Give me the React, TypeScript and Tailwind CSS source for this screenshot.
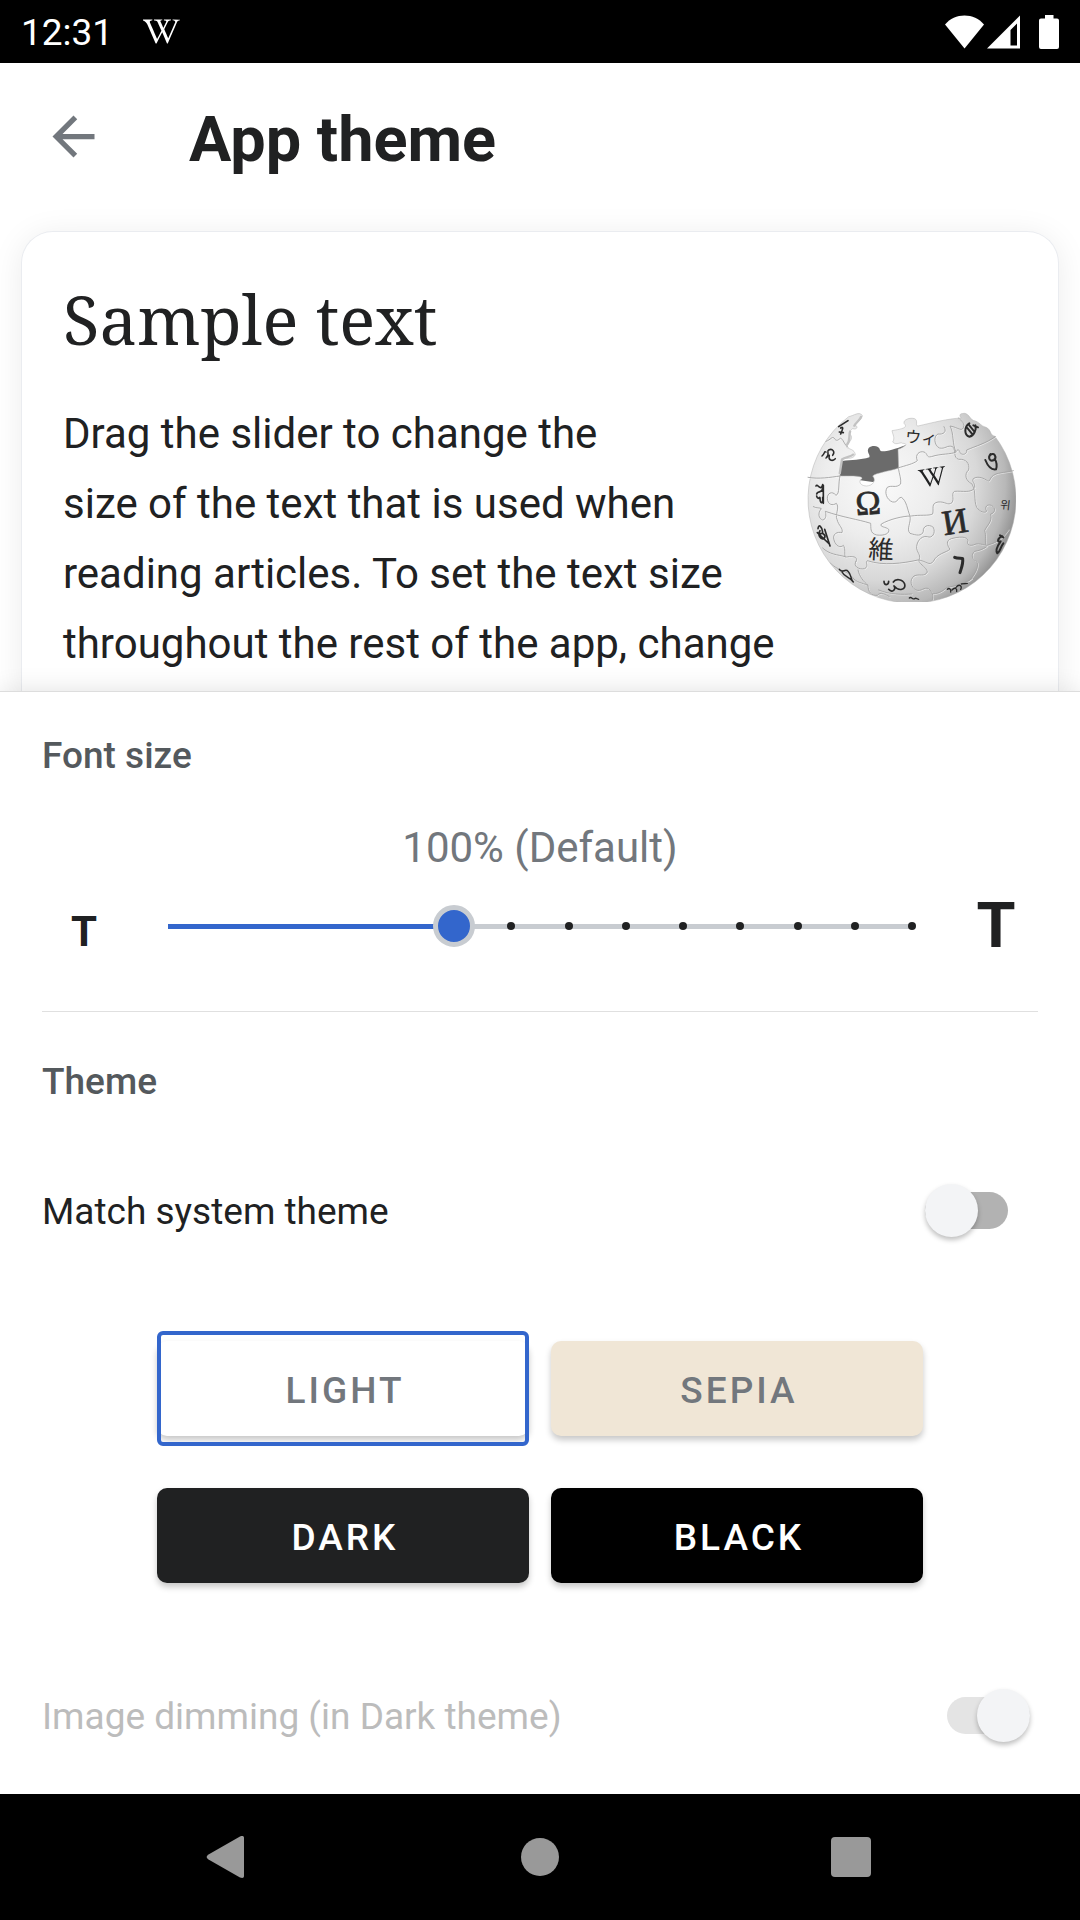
import { useState } from 'react';
import { FaWikipediaW } from 'react-icons/fa';

function StatusBar() {
  return (
    <div className="flex h-[63px] shrink-0 items-center bg-black px-[21px] text-white">
      <span className="pt-[3px] text-[37px] leading-[44px]">12:31</span>
      <FaWikipediaW className="ml-[30px] h-[37px] w-[37px]" aria-hidden="true" />
      <div className="ml-auto flex items-center">
        <svg viewBox="0 0 39 34" className="h-[34px] w-[39px]" fill="currentColor" aria-hidden="true">
          <path d="M19.5 33.5 0 9.5C5 3.5 12 .5 19.5 .5S34 3.5 39 9.5Z" />
        </svg>
        <svg viewBox="0 0 34 34" className="ml-[3px] h-[34px] w-[34px]" fill="currentColor" fillRule="evenodd" aria-hidden="true">
          <path d="M0 33.5 33 .5v33ZM23.500 15v15.500H30V8.500Z" />
        </svg>
        <svg viewBox="0 0 20 34" className="ml-[18px] h-[34px] w-[20px]" fill="currentColor" aria-hidden="true">
          <path d="M6 0h8.500v3.500H18a2 2 0 0 1 2 2V32a2 2 0 0 1-2 2H2a2 2 0 0 1-2-2V5.500a2 2 0 0 1 2-2h4Z" />
        </svg>
      </div>
    </div>
  );
}

const seams = [
  'M56 236C90 242 122 236 152 232',
  'M152 232C146 255 152 286 140 290C128 275 113 284 114 300C115 318 130 322 141 314C152 326 136 350 143 362C148 382 162 388 158 402C144 398 128 406 134 424C140 444 154 448 162 440C170 452 164 466 168 476C192 470 208 476 200 488',
  'M72 324C82 330 92 326 96 330C84 344 88 360 100 364C112 362 110 346 108 338C160 356 206 362 244 374C246 386 240 404 262 409C286 412 302 404 298 392C290 384 270 386 276 376C300 362 340 352 366 352C390 348 420 352 430 346C434 330 424 314 446 310C470 308 474 322 488 312C496 300 484 284 496 278C520 276 544 284 556 268C558 250 546 250 552 240C566 230 586 240 594 246C606 252 596 236 620 226C640 220 662 220 672 216',
  'M327 208C330 228 336 240 334 256C320 270 308 258 294 266C284 280 292 304 310 310C328 312 322 298 336 296C352 306 354 332 362 352C366 372 350 392 362 404C380 410 398 414 402 398C400 384 416 374 432 386C440 404 428 420 414 414C394 410 380 432 382 450C386 466 396 470 388 486C394 500 412 506 414 520C406 536 390 524 374 532C358 546 366 566 380 574C396 580 404 564 418 570C430 580 432 592 430 602',
  'M464 84C474 100 462 108 446 106C432 112 434 140 450 148C468 152 474 138 490 144C502 158 490 176 508 182C530 180 542 194 538 214C524 226 528 246 548 256C562 282 552 302 562 326C572 340 586 344 592 338C584 324 594 316 606 320C622 328 616 344 604 346C610 370 592 380 586 396C592 412 584 430 592 444C580 452 570 456 556 458C544 468 548 484 562 488C570 500 560 524 540 546',
  'M100 448C120 468 146 468 168 474M200 488C190 502 208 514 226 510C240 502 226 492 234 486C282 502 340 494 386 484C410 486 420 504 432 488C444 464 470 462 482 452C474 440 468 426 486 420C508 414 534 412 536 426C530 440 544 444 560 436C580 434 592 444 598 438C624 432 642 416 658 392',
  'M124 494C144 516 170 514 190 536C200 552 218 552 236 560C236 580 246 592 264 590C274 578 288 588 300 594M268 574C300 588 340 588 368 586M430 586C456 584 464 572 474 566C500 562 532 552 548 540M206 514C210 534 224 550 236 560',
  'M326 208C350 200 372 196 384 186C376 168 390 156 404 160C416 164 410 178 426 174C456 164 484 168 500 160C504 150 510 152 512 162C520 172 534 166 532 154C560 142 590 134 618 114',
  'M110 128C124 124 128 112 134 118C142 130 146 124 154 118C164 124 166 142 176 146',
  'M500 160C488 136 494 104 482 82C508 86 520 104 524 80C520 64 512 66 508 58',
];

function GlobeLogo() {
  return (
    <svg viewBox="50 40 630 570" className="h-[190px] w-[210px]" role="img" aria-label="Wikipedia globe">
      <defs>
        <radialGradient id="globeShade" gradientUnits="userSpaceOnUse" cx="270" cy="250" r="420">
          <stop offset="0" stopColor="#fafafa" />
          <stop offset="0.4" stopColor="#ededed" />
          <stop offset="0.7" stopColor="#d8d8d8" />
          <stop offset="0.9" stopColor="#b8b8b8" />
          <stop offset="1" stopColor="#949494" />
        </radialGradient>
      </defs>
      <path fill="#6b6b6b" d="M150 236 158 187C188 184 214 184 240 176C244 168 230 160 238 148C250 138 270 142 272 154C274 162 300 158 352 138L340 215 250 250Z" />
      <path
        fill="url(#globeShade)"
        stroke="#b0b0b0"
        strokeWidth="1.5"
        d="M178 54A312 312 0 1 0 616 112C602 112 606 92 590 86C574 82 570 70 556 66C546 68 540 46 526 44C508 44 510 52 516 58C474 60 430 72 386 82C376 82 388 66 376 60C362 56 342 62 344 74C356 86 344 90 308 96C310 108 318 118 310 130C322 142 334 128 340 134C356 134 352 142 326 152L328 208C300 218 260 222 250 232C262 246 250 261 232 262C212 262 206 246 218 240C222 230 180 232 152 232C150 214 156 200 158 182C166 174 190 186 198 168C196 152 180 152 172 146C172 132 190 128 186 112C178 104 182 94 190 90C202 94 208 84 198 80C200 70 216 68 219 50C208 38 196 50 178 54Z"
      />
      <path fill="none" stroke="#c2c2c2" strokeWidth="7" strokeLinejoin="round" d="M216 52C212 68 198 70 194 84M183 96C176 112 186 124 172 140M194 166C184 176 168 174 158 182L151 226" />
      <g fill="none" strokeLinecap="round" strokeLinejoin="round">
        {seams.map((d) => (
          <g key={d}>
            <path d={d} stroke="#ffffff" strokeWidth="3" transform="translate(2 2)" opacity="0.55" />
            <path d={d} stroke="#a0a0a0" strokeWidth="2.6" />
          </g>
        ))}
      </g>
      <g fill="#2b2b2b" fontFamily="'Liberation Serif', serif" textAnchor="middle">
        <text x="237" y="347" fontSize="102" transform="rotate(-4 237 320)" stroke="#2b2b2b" strokeWidth="2">Ω</text>
        <FaWikipediaW x={388} y={193} size={84} transform="rotate(-9 430 235)" />
        <text x="497" y="404" fontSize="106" transform="rotate(-9 497 370)" stroke="#2b2b2b" strokeWidth="2">И</text>
        <text x="275" y="480" fontSize="76" transform="rotate(3 275 455)" fontFamily="'Noto Sans CJK JP', sans-serif">維</text>
        <text x="396" y="134" fontSize="48" transform="rotate(5 395 115)" fontFamily="'Noto Sans CJK JP', sans-serif">ウィ</text>
        <text x="649" y="331" fontSize="34" transform="rotate(6 649 310)" fontFamily="'Noto Sans CJK KR', sans-serif">위</text>
      </g>
      <g fill="none" stroke="#2b2b2b" strokeWidth="6" strokeLinecap="round" strokeLinejoin="round">
        <path strokeWidth="9" d="M496 476C504 480 518 478 520 480C522 496 516 508 512 522" />
        <path d="M604 166C594 178 602 190 614 184C624 176 614 160 604 168M588 184C596 204 608 214 620 212C624 200 622 190 616 180" />
        <path d="M540 74C524 84 524 110 540 114C554 112 562 92 558 80M534 88 550 108M540 80 556 100M552 80 566 86" strokeWidth="6" />
        <path d="M148 84 176 66M154 88C164 82 160 92 154 106M150 100 162 102" strokeWidth="5" />
        <path d="M98 172C108 164 104 156 110 160M110 178C124 168 110 158 118 154C130 148 138 160 130 170M120 170C116 184 128 190 138 180" strokeWidth="4.5" />
        <path d="M80 262C84 252 94 280 100 258M82 286C84 276 100 284 100 268M82 292C86 308 92 290 92 298C92 314 102 320 100 296M102 260 102 314" strokeWidth="5" />
        <path d="M86 390C88 374 98 384 100 400M84 402 120 436M92 396C84 410 94 424 104 420C112 410 100 400 92 406M106 392 122 442" strokeWidth="5" />
        <path d="M150 512C158 526 168 508 176 518C188 530 182 540 192 550M158 520C166 536 180 534 192 550" strokeWidth="4.5" />
        <path d="M284 548C284 562 298 560 298 548M298 572C308 584 322 572 314 562C330 580 350 572 346 556C340 540 318 540 312 550" strokeWidth="5" />
        <path d="M474 572C480 566 486 572 484 580M488 574C496 564 504 570 502 578M500 566C510 554 520 562 514 572M516 556 534 554" strokeWidth="4" />
        <path d="M638 412C624 420 622 432 634 428C624 442 618 456 624 464C634 458 632 446 642 434M632 410 642 416" strokeWidth="6" />
        <path d="M360 598C366 592 370 604 376 600C380 596 384 602 388 602" strokeWidth="4" />
      </g>
    </svg>
  );
}

const steps = [6, 7, 8, 9, 10, 11, 12, 13];

function FontSizeSlider() {
  const [value, setValue] = useState(5);
  return (
    <div className="relative h-[100px] flex-1">
      <div className="absolute inset-x-[21px] top-[48px] h-[5px] bg-[#c8ccd1]">
        <div className="h-full bg-[#3366cc]" style={{ width: `${(value / 13) * 100}%` }} />
        {steps
          .filter((s) => s > value)
          .map((s) => (
            <span
              key={s}
              className="absolute top-[-2px] ml-[-4px] h-[8px] w-[8px] rounded-full bg-[#202122]"
              style={{ left: `${(s / 13) * 100}%` }}
            />
          ))}
      </div>
      <input
        type="range"
        min={0}
        max={13}
        value={value}
        onChange={(e) => setValue(Number(e.target.value))}
        aria-label="Font size"
        className="absolute inset-0 h-full w-full appearance-none bg-transparent [&::-webkit-slider-thumb]:h-[42px] [&::-webkit-slider-thumb]:w-[42px] [&::-webkit-slider-thumb]:appearance-none [&::-webkit-slider-thumb]:rounded-full [&::-webkit-slider-thumb]:border-[5px] [&::-webkit-slider-thumb]:border-[#c8ccd1] [&::-webkit-slider-thumb]:bg-[#3366cc]"
      />
    </div>
  );
}

const switchBase =
  "relative h-[37px] w-[83px] shrink-0 appearance-none rounded-full before:absolute before:top-[-8px] before:left-0 before:h-[53px] before:w-[53px] before:rounded-full before:bg-[#f3f4f6] before:shadow-[0_3px_5px_rgba(0,0,0,0.25)] before:content-[''] checked:before:right-0 checked:before:left-auto";

const themes = [
  { name: 'LIGHT', style: 'bg-white text-[#72777d]' },
  { name: 'SEPIA', style: 'bg-[#f0e6d6] text-[#72777d]' },
  { name: 'DARK', style: 'bg-[#202122] text-white' },
  { name: 'BLACK', style: 'bg-black text-white' },
];

export default function App() {
  const [theme, setTheme] = useState('LIGHT');
  const [matchSystem, setMatchSystem] = useState(false);
  return (
    <div className="flex h-screen flex-col overflow-hidden bg-white font-['Roboto',sans-serif] text-[#202122]">
      <StatusBar />
      <header className="flex h-[147px] shrink-0 items-center pl-[42px]">
        <button type="button" aria-label="Back" className="text-[#72777d]">
          <svg viewBox="0 0 24 24" className="h-[63px] w-[63px]" fill="currentColor">
            <path d="M20 11H7.830l5.590-5.590L12 4l-8 8 8 8 1.410-1.410L7.830 13H20v-2z" />
          </svg>
        </button>
        <h1 className="ml-[84px] pt-[6px] text-[63px] leading-[72px] font-bold">App theme</h1>
      </header>

      <main className="min-h-0 flex-1 px-[21px] pt-[21px]">
        <article className="h-full rounded-t-[32px] border border-b-0 border-[#eaecf0] bg-white px-[41px] pt-[47px] shadow-[0_4px_32px_rgba(0,0,0,0.08)]">
          <h2 className="font-['Noto_Serif','DejaVu_Serif',serif] text-[67px] leading-[80px]">Sample text</h2>
          <div className="mt-[40px] flex items-start justify-between">
            <p className="text-[42px] leading-[70px] whitespace-nowrap">
              Drag the slider to change the
              <br />
              size of the text that is used when
              <br />
              reading articles. To set the text size
              <br />
              throughout the rest of the app, change
            </p>
            <div className="mt-[13px] mr-px shrink-0">
              <GlobeLogo />
            </div>
          </div>
        </article>
      </main>

      <section className="relative shrink-0 border-t border-[#dddddd] bg-white px-[42px] pt-[40px] pb-[26px] shadow-[0_0_24px_rgba(0,0,0,0.12)]">
        <h3 className="text-[37px] leading-[48px] font-medium text-[#54595d]">Font size</h3>
        <p className="mt-[40px] text-center text-[42px] leading-[56px] text-[#72777d]">100% (Default)</p>
        <div className="flex items-center gap-[21px]">
          <button type="button" aria-label="Decrease font size" className="w-[84px] pt-3 text-[42px] leading-[56px] font-bold">
            T
          </button>
          <FontSizeSlider />
          <button type="button" aria-label="Increase font size" className="w-[84px] text-[63px] leading-[72px] font-bold">
            T
          </button>
        </div>
        <hr className="mt-[35px] border-[#e0e0e0]" />

        <h3 className="mt-[46px] text-[37px] leading-[48px] font-medium text-[#54595d]">Theme</h3>
        <label className="mt-[52px] flex h-[105px] items-center justify-between pr-[30px]">
          <span className="pt-[2px] text-[37px] leading-[48px]">Match system theme</span>
          <input
            type="checkbox"
            role="switch"
            checked={matchSystem}
            onChange={(e) => setMatchSystem(e.target.checked)}
            className={`${switchBase} bg-[#b2b2b2]`}
          />
        </label>

        <div className="mx-[115px] mt-[78px] grid grid-cols-2 gap-x-[22px] gap-y-[52px]">
          {themes.map((t) => (
            <button
              key={t.name}
              type="button"
              aria-pressed={theme === t.name}
              onClick={() => setTheme(t.name)}
              className={`relative h-[95px] rounded-[10px] pt-1 pl-1 text-[37px] leading-[48px] font-medium tracking-[3px] shadow-[0_4px_6px_rgba(0,0,0,0.22)] ${t.style}`}
            >
              {t.name}
              {theme === t.name && (
                <span className="absolute inset-x-0 inset-y-[-10px] rounded-[6px] border-4 border-[#3366cc]" />
              )}
            </button>
          ))}
        </div>

        <label className="mt-[80px] flex h-[105px] items-center justify-between pr-[8px] text-[#bcbcbc]">
          <span className="pt-[2px] text-[37px] leading-[48px]">Image dimming (in Dark theme)</span>
          <input type="checkbox" role="switch" defaultChecked disabled className={`${switchBase} bg-[#e4e4e4]`} />
        </label>
      </section>

      <nav className="relative flex h-[126px] shrink-0 items-center justify-between bg-black px-[184px] text-[#999999]">
        <button type="button" aria-label="Back">
          <svg viewBox="0 0 84 84" className="h-[84px] w-[84px]" fill="currentColor">
            <path d="M24.500 39.500 56 21.500C58.500 20.500 60 21 60 23v38c0 2-1.500 2.500-4 1.500L24.500 44.500C22 43 22 41 24.500 39.500Z" />
          </svg>
        </button>
        <button type="button" aria-label="Home">
          <svg viewBox="0 0 84 84" className="h-[84px] w-[84px]" fill="currentColor">
            <circle cx="42" cy="42" r="19" />
          </svg>
        </button>
        <button type="button" aria-label="Recent apps">
          <svg viewBox="0 0 84 84" className="h-[84px] w-[84px]" fill="currentColor">
            <rect x="19" y="22" width="40" height="40" rx="4" />
          </svg>
        </button>
      </nav>
    </div>
  );
}
